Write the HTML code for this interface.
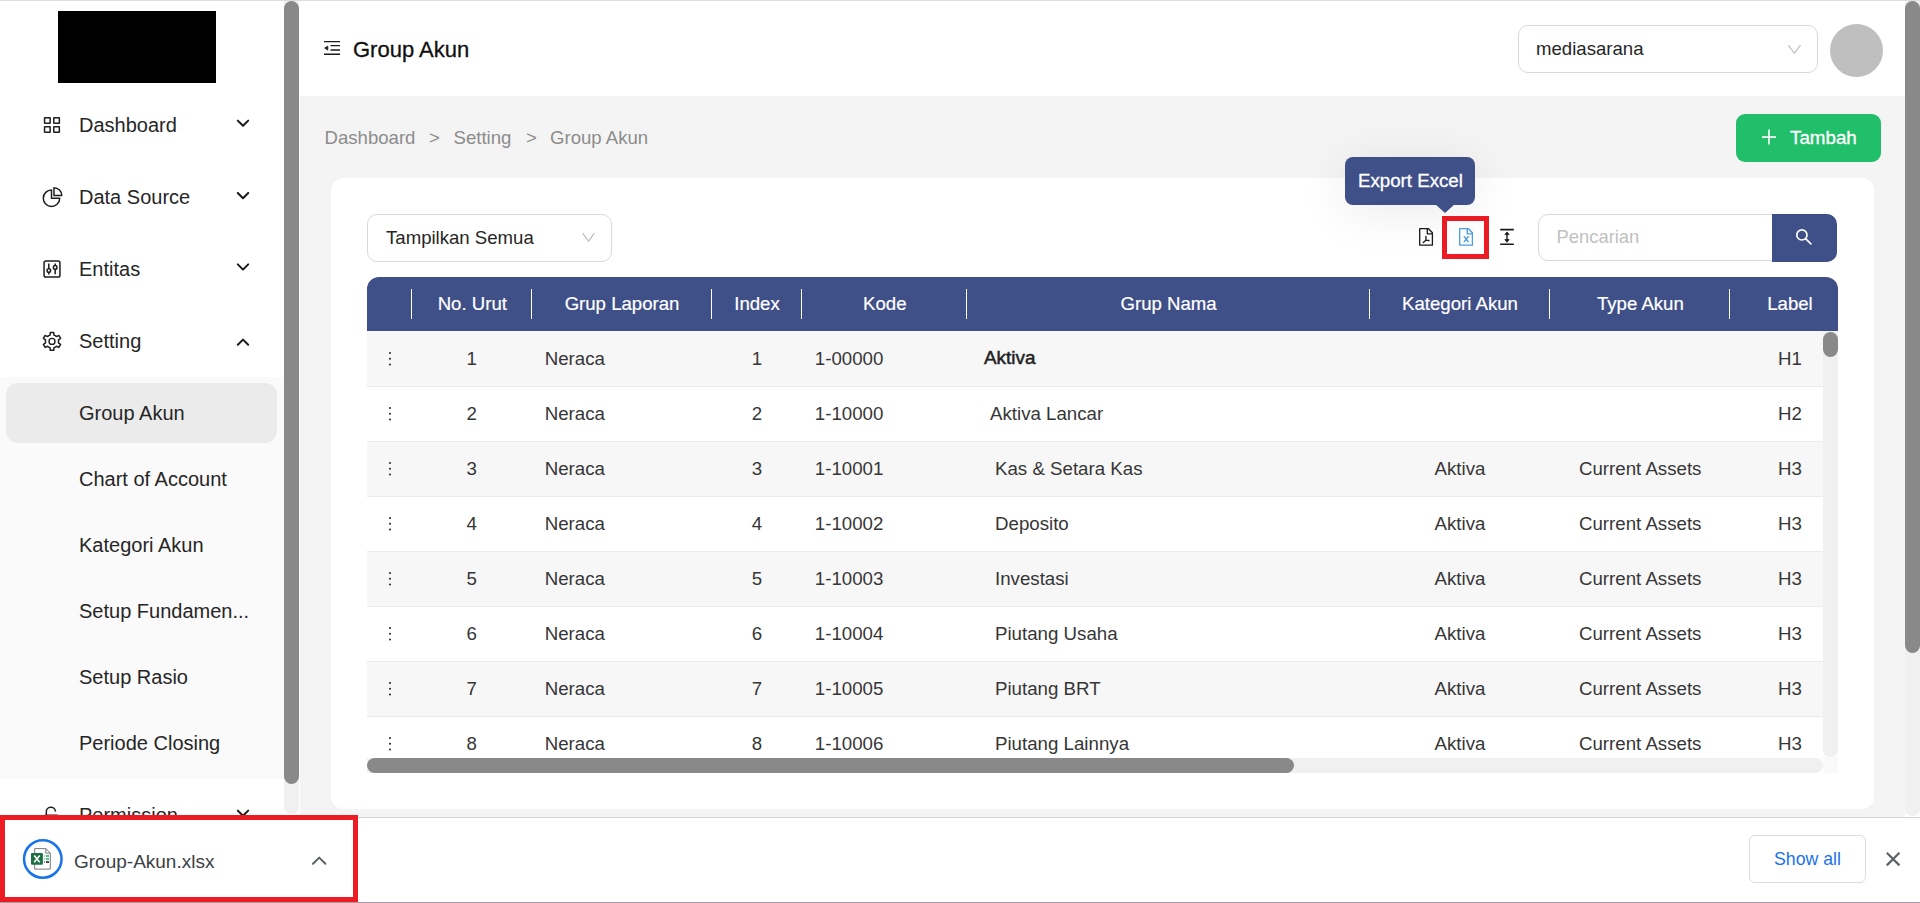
<!DOCTYPE html>
<html><head><meta charset="utf-8">
<style>
*{box-sizing:border-box;margin:0;padding:0}
html,body{width:1920px;height:903px;overflow:hidden;background:#fff;font-family:"Liberation Sans",sans-serif;color:#262626}
.a{position:absolute}
.t{position:absolute;white-space:nowrap;line-height:1}
svg{position:absolute;overflow:visible}
.hd{font-size:18.6px;color:#fff;-webkit-text-stroke:0.2px #fff}
.bd{font-size:18.7px;color:#363636}
.dots{width:2.3px;height:2.3px;background:#222;border-radius:50%;box-shadow:0 5.7px 0 #222,0 11.4px 0 #222}
</style></head><body>
<!-- top line -->
<div class="a" style="left:0;top:0;width:1920px;height:1px;background:#dcdde0"></div>

<!-- SIDEBAR -->
<div class="a" style="left:0;top:1px;width:284px;height:816px;background:#fff"></div>
<div class="a" style="left:58px;top:11px;width:158px;height:72px;background:#000"></div>

<!-- submenu bg -->
<div class="a" style="left:0;top:377px;width:284px;height:402px;background:#fafafa"></div>
<div class="a" style="left:6px;top:383px;width:271px;height:60px;background:#ebebeb;border-radius:12px"></div>

<div class="t" style="left:79px;top:115px;font-size:20px">Dashboard</div>
<div class="t" style="left:79px;top:187px;font-size:20px">Data Source</div>
<div class="t" style="left:79px;top:259px;font-size:20px">Entitas</div>
<div class="t" style="left:79px;top:331.2px;font-size:20px">Setting</div>
<div class="t" style="left:79px;top:403px;font-size:20px">Group Akun</div>
<div class="t" style="left:79px;top:469px;font-size:20px">Chart of Account</div>
<div class="t" style="left:79px;top:535px;font-size:20px">Kategori Akun</div>
<div class="t" style="left:79px;top:601px;font-size:20px">Setup Fundamen...</div>
<div class="t" style="left:79px;top:667px;font-size:20px">Setup Rasio</div>
<div class="t" style="left:79px;top:733px;font-size:20px">Periode Closing</div>
<div class="t" style="left:79px;top:805px;font-size:20px">Permission</div>

<!-- sidebar scrollbar -->
<div class="a" style="left:284px;top:1px;width:15px;height:813px;background:#f0f0f0;border-radius:0 0 7px 7px"></div>
<div class="a" style="left:284px;top:1px;width:15px;height:783px;background:#898989;border-radius:7.5px"></div>

<!-- MAIN -->
<div class="a" style="left:299px;top:1px;width:1606px;height:95px;background:#fff"></div>
<div class="a" style="left:300px;top:96px;width:1605px;height:721px;background:#f4f4f4"></div>

<div class="t" style="left:353px;top:38.5px;font-size:22px;color:#111;-webkit-text-stroke:0.3px #111">Group Akun</div>

<!-- company select -->
<div class="a" style="left:1518px;top:25px;width:300px;height:48px;border:1px solid #d9d9d9;border-radius:10px;background:#fff"></div>
<div class="t" style="left:1536px;top:39.5px;font-size:18.6px;color:#262626">mediasarana</div>
<div class="a" style="left:1830px;top:24px;width:53px;height:53px;border-radius:50%;background:#bfbfbf"></div>

<!-- breadcrumb -->
<div class="t" style="left:324.5px;top:129.2px;font-size:18.6px;color:#8c8c8c">Dashboard</div>
<div class="t" style="left:429px;top:129.2px;font-size:18.6px;color:#8c8c8c">&gt;</div>
<div class="t" style="left:453.5px;top:129.2px;font-size:18.6px;color:#8c8c8c">Setting</div>
<div class="t" style="left:526px;top:129.2px;font-size:18.6px;color:#8c8c8c">&gt;</div>
<div class="t" style="left:550px;top:129.2px;font-size:18.6px;color:#8c8c8c">Group Akun</div>

<!-- Tambah -->
<div class="a" style="left:1736px;top:114px;width:145px;height:48px;background:#22bf6b;border-radius:9px"></div>
<div class="t" style="left:1790px;top:129.3px;font-size:18.8px;color:#fff;-webkit-text-stroke:0.3px #fff">Tambah</div>

<!-- card -->
<div class="a" style="left:331px;top:178px;width:1543px;height:631px;background:#fff;border-radius:12px"></div>

<!-- filter select -->
<div class="a" style="left:367px;top:214px;width:245px;height:48px;border:1px solid #d9d9d9;border-radius:10px;background:#fff"></div>
<div class="t" style="left:386px;top:228.5px;font-size:18.6px;color:#262626">Tampilkan Semua</div>

<!-- search -->
<div class="a" style="left:1538px;top:214px;width:250px;height:47px;border:1px solid #d9d9d9;border-radius:10px;background:#fff"></div>
<div class="a" style="left:1772px;top:214px;width:65px;height:48px;background:#3f4f88;border-radius:0 10px 10px 0"></div>
<div class="t" style="left:1556.5px;top:227.5px;font-size:18.4px;color:#bfbfbf">Pencarian</div>

<!-- TABLE -->
<!--TBL-->
<div class="a" style="left:367px;top:277px;width:1471px;height:54px;background:#3f4f88;border-radius:12px 12px 0 0"></div>
<div class="a" style="left:410.75px;top:289px;width:1.5px;height:30px;background:#fff"></div>
<div class="a" style="left:530.75px;top:289px;width:1.5px;height:30px;background:#fff"></div>
<div class="a" style="left:710.75px;top:289px;width:1.5px;height:30px;background:#fff"></div>
<div class="a" style="left:800.75px;top:289px;width:1.5px;height:30px;background:#fff"></div>
<div class="a" style="left:965.75px;top:289px;width:1.5px;height:30px;background:#fff"></div>
<div class="a" style="left:1368.75px;top:289px;width:1.5px;height:30px;background:#fff"></div>
<div class="a" style="left:1548.75px;top:289px;width:1.5px;height:30px;background:#fff"></div>
<div class="a" style="left:1728.75px;top:289px;width:1.5px;height:30px;background:#fff"></div>
<div class="t hd" style="left:272.3px;width:400px;text-align:center;top:294.76px">No. Urut</div>
<div class="t hd" style="left:422px;width:400px;text-align:center;top:294.76px">Grup Laporan</div>
<div class="t hd" style="left:557px;width:400px;text-align:center;top:294.76px">Index</div>
<div class="t hd" style="left:684.8px;width:400px;text-align:center;top:294.76px">Kode</div>
<div class="t hd" style="left:968.5999999999999px;width:400px;text-align:center;top:294.76px">Grup Nama</div>
<div class="t hd" style="left:1260px;width:400px;text-align:center;top:294.76px">Kategori Akun</div>
<div class="t hd" style="left:1440.4px;width:400px;text-align:center;top:294.76px">Type Akun</div>
<div class="t hd" style="left:1590px;width:400px;text-align:center;top:294.76px">Label</div>
<div class="a" style="left:367px;top:331px;width:1456px;height:426px;overflow:hidden">
<div class="a" style="left:0;top:0px;width:1456px;height:55px;background:#f7f7f7"></div>
<div class="a" style="left:0;top:55px;width:1456px;height:1px;background:#ebebeb;z-index:1"></div>
<div class="a dots" style="left:21.75px;top:21.199999999999978px"></div>
<div class="t bd" style="left:4.800000000000011px;width:200px;text-align:center;top:18.57px">1</div>
<div class="t bd" style="left:177.70000000000005px;top:18.57px">Neraca</div>
<div class="t bd" style="left:290px;width:200px;text-align:center;top:18.57px">1</div>
<div class="t bd" style="left:447.79999999999995px;top:18.57px">1-00000</div>
<div class="t bd" style="left:617px;top:18.4px;font-size:18.9px;color:#222;-webkit-text-stroke:0.5px #222">Aktiva</div>
<div class="t bd" style="left:1323px;width:200px;text-align:center;top:18.57px">H1</div>
<div class="a" style="left:0;top:55px;width:1456px;height:55px;background:#fff"></div>
<div class="a" style="left:0;top:110px;width:1456px;height:1px;background:#ebebeb;z-index:1"></div>
<div class="a dots" style="left:21.75px;top:76.19999999999997px"></div>
<div class="t bd" style="left:4.800000000000011px;width:200px;text-align:center;top:73.57px">2</div>
<div class="t bd" style="left:177.70000000000005px;top:73.57px">Neraca</div>
<div class="t bd" style="left:290px;width:200px;text-align:center;top:73.57px">2</div>
<div class="t bd" style="left:447.79999999999995px;top:73.57px">1-10000</div>
<div class="t bd" style="left:623px;top:73.57px">Aktiva Lancar</div>
<div class="t bd" style="left:1323px;width:200px;text-align:center;top:73.57px">H2</div>
<div class="a" style="left:0;top:110px;width:1456px;height:55px;background:#f7f7f7"></div>
<div class="a" style="left:0;top:165px;width:1456px;height:1px;background:#ebebeb;z-index:1"></div>
<div class="a dots" style="left:21.75px;top:131.2px"></div>
<div class="t bd" style="left:4.800000000000011px;width:200px;text-align:center;top:128.57px">3</div>
<div class="t bd" style="left:177.70000000000005px;top:128.57px">Neraca</div>
<div class="t bd" style="left:290px;width:200px;text-align:center;top:128.57px">3</div>
<div class="t bd" style="left:447.79999999999995px;top:128.57px">1-10001</div>
<div class="t bd" style="left:628px;top:128.57px">Kas &amp; Setara Kas</div>
<div class="t bd" style="left:993px;width:200px;text-align:center;top:128.57px">Aktiva</div>
<div class="t bd" style="left:1173.2px;width:200px;text-align:center;top:128.57px">Current Assets</div>
<div class="t bd" style="left:1323px;width:200px;text-align:center;top:128.57px">H3</div>
<div class="a" style="left:0;top:165px;width:1456px;height:55px;background:#fff"></div>
<div class="a" style="left:0;top:220px;width:1456px;height:1px;background:#ebebeb;z-index:1"></div>
<div class="a dots" style="left:21.75px;top:186.2px"></div>
<div class="t bd" style="left:4.800000000000011px;width:200px;text-align:center;top:183.57px">4</div>
<div class="t bd" style="left:177.70000000000005px;top:183.57px">Neraca</div>
<div class="t bd" style="left:290px;width:200px;text-align:center;top:183.57px">4</div>
<div class="t bd" style="left:447.79999999999995px;top:183.57px">1-10002</div>
<div class="t bd" style="left:628px;top:183.57px">Deposito</div>
<div class="t bd" style="left:993px;width:200px;text-align:center;top:183.57px">Aktiva</div>
<div class="t bd" style="left:1173.2px;width:200px;text-align:center;top:183.57px">Current Assets</div>
<div class="t bd" style="left:1323px;width:200px;text-align:center;top:183.57px">H3</div>
<div class="a" style="left:0;top:220px;width:1456px;height:55px;background:#f7f7f7"></div>
<div class="a" style="left:0;top:275px;width:1456px;height:1px;background:#ebebeb;z-index:1"></div>
<div class="a dots" style="left:21.75px;top:241.2px"></div>
<div class="t bd" style="left:4.800000000000011px;width:200px;text-align:center;top:238.57px">5</div>
<div class="t bd" style="left:177.70000000000005px;top:238.57px">Neraca</div>
<div class="t bd" style="left:290px;width:200px;text-align:center;top:238.57px">5</div>
<div class="t bd" style="left:447.79999999999995px;top:238.57px">1-10003</div>
<div class="t bd" style="left:628px;top:238.57px">Investasi</div>
<div class="t bd" style="left:993px;width:200px;text-align:center;top:238.57px">Aktiva</div>
<div class="t bd" style="left:1173.2px;width:200px;text-align:center;top:238.57px">Current Assets</div>
<div class="t bd" style="left:1323px;width:200px;text-align:center;top:238.57px">H3</div>
<div class="a" style="left:0;top:275px;width:1456px;height:55px;background:#fff"></div>
<div class="a" style="left:0;top:330px;width:1456px;height:1px;background:#ebebeb;z-index:1"></div>
<div class="a dots" style="left:21.75px;top:296.2px"></div>
<div class="t bd" style="left:4.800000000000011px;width:200px;text-align:center;top:293.57px">6</div>
<div class="t bd" style="left:177.70000000000005px;top:293.57px">Neraca</div>
<div class="t bd" style="left:290px;width:200px;text-align:center;top:293.57px">6</div>
<div class="t bd" style="left:447.79999999999995px;top:293.57px">1-10004</div>
<div class="t bd" style="left:628px;top:293.57px">Piutang Usaha</div>
<div class="t bd" style="left:993px;width:200px;text-align:center;top:293.57px">Aktiva</div>
<div class="t bd" style="left:1173.2px;width:200px;text-align:center;top:293.57px">Current Assets</div>
<div class="t bd" style="left:1323px;width:200px;text-align:center;top:293.57px">H3</div>
<div class="a" style="left:0;top:330px;width:1456px;height:55px;background:#f7f7f7"></div>
<div class="a" style="left:0;top:385px;width:1456px;height:1px;background:#ebebeb;z-index:1"></div>
<div class="a dots" style="left:21.75px;top:351.2px"></div>
<div class="t bd" style="left:4.800000000000011px;width:200px;text-align:center;top:348.57px">7</div>
<div class="t bd" style="left:177.70000000000005px;top:348.57px">Neraca</div>
<div class="t bd" style="left:290px;width:200px;text-align:center;top:348.57px">7</div>
<div class="t bd" style="left:447.79999999999995px;top:348.57px">1-10005</div>
<div class="t bd" style="left:628px;top:348.57px">Piutang BRT</div>
<div class="t bd" style="left:993px;width:200px;text-align:center;top:348.57px">Aktiva</div>
<div class="t bd" style="left:1173.2px;width:200px;text-align:center;top:348.57px">Current Assets</div>
<div class="t bd" style="left:1323px;width:200px;text-align:center;top:348.57px">H3</div>
<div class="a" style="left:0;top:385px;width:1456px;height:55px;background:#fff"></div>
<div class="a" style="left:0;top:440px;width:1456px;height:1px;background:#ebebeb;z-index:1"></div>
<div class="a dots" style="left:21.75px;top:406.2px"></div>
<div class="t bd" style="left:4.800000000000011px;width:200px;text-align:center;top:403.57px">8</div>
<div class="t bd" style="left:177.70000000000005px;top:403.57px">Neraca</div>
<div class="t bd" style="left:290px;width:200px;text-align:center;top:403.57px">8</div>
<div class="t bd" style="left:447.79999999999995px;top:403.57px">1-10006</div>
<div class="t bd" style="left:628px;top:403.57px">Piutang Lainnya</div>
<div class="t bd" style="left:993px;width:200px;text-align:center;top:403.57px">Aktiva</div>
<div class="t bd" style="left:1173.2px;width:200px;text-align:center;top:403.57px">Current Assets</div>
<div class="t bd" style="left:1323px;width:200px;text-align:center;top:403.57px">H3</div>
</div>
<div class="a" style="left:1823px;top:331px;width:15px;height:426px;background:#f0f0f0;border-radius:0 0 7px 7px"></div>
<div class="a" style="left:1823px;top:332px;width:15px;height:25px;background:#898989;border-radius:7.5px"></div>
<div class="a" style="left:1823px;top:757px;width:15px;height:16px;background:#f9f9f9"></div>
<div class="a" style="left:367px;top:758px;width:1456px;height:15px;background:#f0f0f0;border-radius:0 7.5px 7.5px 0"></div>
<div class="a" style="left:367px;top:758px;width:927px;height:15px;background:#898989;border-radius:7.5px"></div>
<!--/TBL-->

<!--ICONS-->
<svg style="left:0;top:0" width="1920" height="903" viewBox="0 0 1920 903" fill="none" stroke="#1f1f1f" stroke-width="1.5">
<!-- dashboard grid -->
<rect x="44.55" y="117.65" width="5.6" height="5.6" rx="0.3"/>
<rect x="53.75" y="117.65" width="5.6" height="5.6" rx="0.3"/>
<rect x="44.55" y="126.65" width="5.6" height="5.6" rx="0.3"/>
<rect x="53.75" y="126.65" width="5.6" height="5.6" rx="0.3"/>
<!-- data source pie -->
<path d="M51.5,190 V198.2 H59.7 A8.2,8.2 0 1 1 51.5,190 Z" stroke-linejoin="round"/>
<path d="M54,187.8 V195.6 H61.8 A7.8,7.8 0 0 0 54,187.8 Z" stroke-linejoin="round"/>
<!-- entitas sliders -->
<rect x="44.05" y="260.95" width="15.9" height="16" rx="1.8"/>
<path d="M48.8,263.5 V274.6 M55.2,263.5 V274.2"/>
<circle cx="48.8" cy="270.5" r="1.8" fill="#fff"/>
<circle cx="55.2" cy="267.4" r="1.8" fill="#fff"/>
<!-- setting gear -->
<path d="M48.70,335.68 L50.07,335.09 L50.26,332.47 L53.74,332.47 L53.93,335.09 L55.30,335.68 L56.50,336.57 L58.87,335.43 L60.60,338.44 L58.43,339.92 L58.60,341.40 L58.43,342.88 L60.60,344.36 L58.87,347.37 L56.50,346.23 L55.30,347.12 L53.93,347.71 L53.74,350.33 L50.26,350.33 L50.07,347.71 L48.70,347.12 L47.50,346.23 L45.13,347.37 L43.40,344.36 L45.57,342.88 L45.40,341.40 L45.57,339.92 L43.40,338.44 L45.13,335.43 L47.50,336.57Z" stroke-linejoin="round"/>
<circle cx="52" cy="341.4" r="3" stroke-width="1.4"/>
<!-- permission lock (partial) -->
<path d="M46.3,815.5 V812.2 A4.6,4.6 0 0 1 55.5,811.6"/>
<rect x="44.5" y="815.2" width="14" height="10" rx="1.5"/>
<!-- chevrons -->
<g stroke-width="2" stroke-linecap="round" stroke-linejoin="round" stroke="#1a1a1a">
<path d="M237.8,120.6 L243,125.8 L248.2,120.6"/>
<path d="M237.8,193 L243,198.2 L248.2,193"/>
<path d="M237.8,264.4 L243,269.6 L248.2,264.4"/>
<path d="M237.8,344.8 L243,339.6 L248.2,344.8"/>
<path d="M237.8,810.6 L243,815.8 L248.2,810.6"/>
</g>
<!-- header outdent icon -->
<g stroke="#1a1a1a" stroke-width="1.4">
<path d="M324,41.6 H340 M330.5,45.6 H340 M330.5,50 H340 M324,54.2 H340"/>
<path d="M324.5,48.1 L327.9,46 V50.2 Z" fill="#1a1a1a" stroke-width="0.6"/>
</g>
<!-- select chevrons -->
<g stroke="#bdbdbd" stroke-width="1.2" fill="none">
<path d="M1788.4,45.2 L1794.4,53.3 L1800.5,45.2"/>
<path d="M582.6,233.2 L588.5,241.2 L594.4,233.2"/>
</g>
<!-- plus in tambah -->
<path d="M1769,129.6 V144.6 M1762,137.1 H1776" stroke="#fff" stroke-width="1.6"/>
<!-- search icon -->
<g stroke="#fff" stroke-width="1.7" stroke-linecap="round">
<circle cx="1801.9" cy="234.9" r="5.1"/>
<path d="M1805.8,238.8 L1810.9,243.9"/>
</g>
<!-- pdf icon -->
<g stroke="#1a1a1a" stroke-width="1.3" stroke-linejoin="round">
<path d="M1419.7,228.7 H1428.5 L1432.4,232.8 V245.2 H1419.7 Z"/>
<path d="M1427.3,228.7 V233.8 H1432.4"/>
<path d="M1425.9,236.3 V240.2 L1423.3,242.6 M1425.9,240.2 L1429,240.5" stroke-width="1.35" stroke-linecap="round"/>
</g>
<!-- excel icon blue -->
<g stroke="#4a9fe3" stroke-width="1.3" stroke-linejoin="round">
<path d="M1459.7,228.7 H1468.5 L1472.4,232.8 V245.2 H1459.7 Z"/>
<path d="M1467.3,228.7 V233.8 H1472.4"/>
<path d="M1464.4,236.9 L1468.1,241.5 M1468.1,236.9 L1464.4,241.5" stroke-width="1.35"/><path d="M1463.5,236.7 H1465.3 M1467.2,236.7 H1469 M1463.5,241.7 H1465.3 M1467.2,241.7 H1469" stroke-width="0.9"/>
</g>
<!-- height icon -->
<g stroke="#1a1a1a">
<path d="M1500.2,229.6 H1513.8 M1500.2,244.2 H1513.8" stroke-width="1.6"/>
<path d="M1507,233 V241" stroke-width="1.4"/>
<path d="M1504.9,234.6 L1507,231.9 L1509.1,234.6 Z M1504.9,239.6 L1507,242.3 L1509.1,239.6 Z" fill="#1a1a1a" stroke-width="0.8"/>
</g>
</svg>
<!-- red box toolbar -->
<div class="a" style="left:1442px;top:216px;width:47px;height:43px;border:5px solid #ed1c24"></div>
<!-- tooltip -->
<div class="a" style="left:1345px;top:157px;width:130px;height:48px;background:#3f4f88;border-radius:8px;box-shadow:0 6px 50px rgba(0,0,0,0.085)"></div>
<svg style="left:1433px;top:204px" width="24" height="10" viewBox="0 0 24 10"><path d="M2,0 L12,9 L22,0 Z" fill="#3f4f88"/></svg>
<div class="t" style="left:1358px;top:172px;font-size:18.7px;color:#fff;-webkit-text-stroke:0.3px #fff">Export Excel</div>
<!--/ICONS-->

<!-- download bar -->
<div class="a" style="left:0;top:817px;width:1920px;height:86px;background:#fff;border-top:1px solid #d3d3d3"></div>
<div class="a" style="left:0;top:902px;width:1920px;height:1px;background:#a69aa6"></div>
<div class="a" style="left:0;top:815px;width:358px;height:87px;border:5px solid #ed1c24"></div>
<div class="t" style="left:74px;top:851.6px;font-size:19px;color:#3c4043">Group-Akun.xlsx</div>
<div class="a" style="left:1749px;top:835px;width:117px;height:48px;border:1px solid #dadce0;border-radius:6px"></div>
<div class="t" style="left:1774px;top:851.3px;font-size:17.7px;color:#1a73e8">Show all</div>

<!--DLICONS-->
<svg style="left:0;top:0" width="1920" height="903" viewBox="0 0 1920 903" fill="none">
<circle cx="42.8" cy="859" r="18.75" stroke="#1a73e8" stroke-width="2.5"/>
<path d="M34.7,848.6 H45.8 L50.3,853.1 V869.1 H34.7 Z" fill="#fff" stroke="#7a7a7a" stroke-width="1"/>
<path d="M45.8,848.6 V853.1 H50.3" stroke="#7a7a7a" stroke-width="1"/>
<rect x="31" y="853.1" width="11.9" height="11.7" rx="1" fill="#1d7044"/>
<path d="M34.2,855.6 L39.7,862.3 M39.7,855.6 L34.2,862.3" stroke="#fff" stroke-width="1.6"/>
<path d="M44,856 H44.6 M46,856 H49 M44,859 H44.6 M46,859 H49" stroke="#1fb35a" stroke-width="1.3"/>
<path d="M44,862 H44.6 M46,862 H49" stroke="#111" stroke-width="1.3"/>
<path d="M313,863.8 L319.2,857.6 L325.4,863.8" stroke="#5f6368" stroke-width="2" stroke-linecap="round" stroke-linejoin="round"/>
<path d="M1886.8,852.8 L1899.4,865.4 M1899.4,852.8 L1886.8,865.4" stroke="#5f6368" stroke-width="2.2"/>
</svg>
<!--/DLICONS-->

<!-- right page scrollbar -->
<div class="a" style="left:1905px;top:1px;width:15px;height:815px;background:#f0f0f0;border-radius:0 0 7px 7px"></div>
<div class="a" style="left:1905px;top:1px;width:15px;height:652px;background:#898989;border-radius:7.5px"></div>
</body></html>
